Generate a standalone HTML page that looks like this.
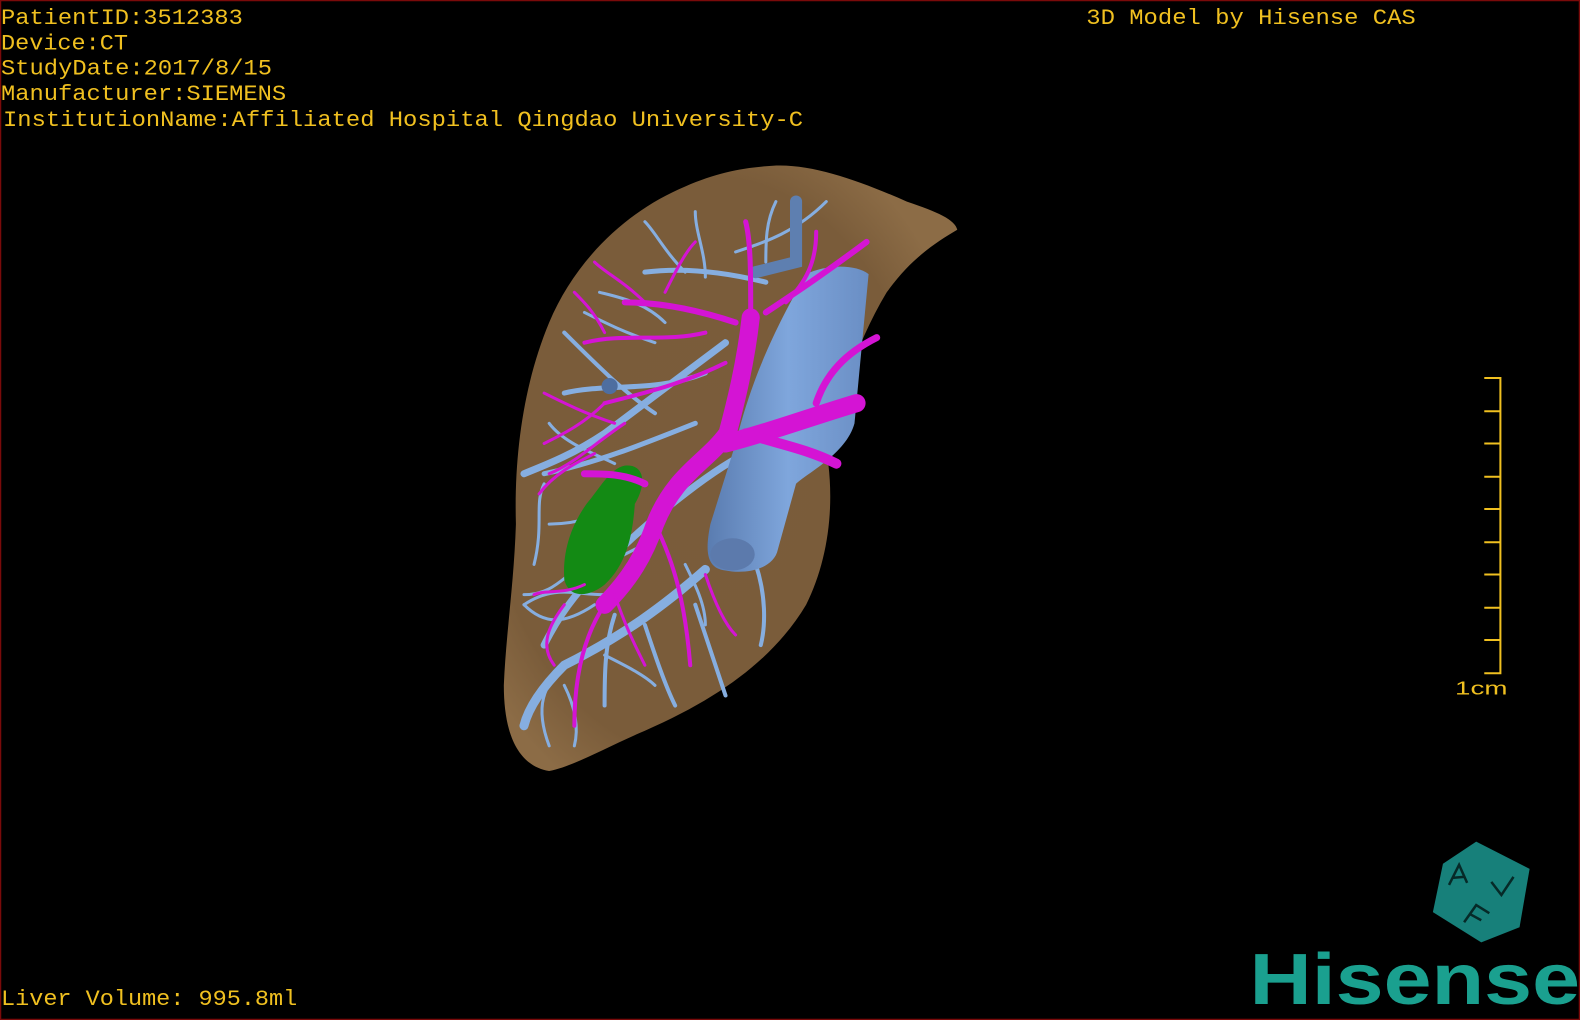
<!DOCTYPE html>
<html><head><meta charset="utf-8"><style>
html,body{margin:0;padding:0;background:#000;width:1580px;height:1020px;overflow:hidden}
svg{display:block}
</style></head><body>
<svg width="1580" height="1020" viewBox="0 0 1568 1012" preserveAspectRatio="none" xmlns="http://www.w3.org/2000/svg">
<defs>
<radialGradient id="lg" cx="0.45" cy="0.5" r="0.6">
<stop offset="0" stop-color="#7a5c3b"/><stop offset="0.8" stop-color="#7a5c3a"/><stop offset="1" stop-color="#8c6c46"/>
</radialGradient>
<linearGradient id="ivc" x1="0" y1="0" x2="1" y2="0">
<stop offset="0" stop-color="#5a7cb0"/><stop offset="0.5" stop-color="#7fa6dc"/><stop offset="1" stop-color="#6a8ec4"/>
</linearGradient>
</defs>
<rect x="0.5" y="0.5" width="1567" height="1011" fill="#000" stroke="#7a0a0a" stroke-width="1.5"/>
<path d="M760,165 C800,160 850,178 900,200 C930,210 948,218 950,228 C930,240 905,255 880,290 C850,340 830,400 822,460 C828,510 820,560 800,600 C770,650 720,690 640,725 C600,742 570,760 545,765 C515,760 500,730 500,680 C502,630 510,580 512,520 C510,450 520,380 545,320 C570,260 620,210 680,185 C710,172 735,167 760,165 Z" fill="url(#lg)"/>
<g stroke="#86aee0" stroke-linecap="round" fill="none">
<path d="M700,565 C660,600 620,630 560,660 C540,680 525,700 520,720" stroke-width="9"/>
<path d="M740,450 C700,470 640,520 600,560 C580,580 560,600 540,640" stroke-width="7"/>
<path d="M720,340 C680,370 640,400 600,430 C570,450 545,460 520,470" stroke-width="7"/>
<path d="M700,370 C650,390 600,380 560,390" stroke-width="5"/>
<path d="M690,420 C640,440 590,460 540,470" stroke-width="5"/>
<path d="M650,410 C620,390 590,360 560,330" stroke-width="4"/>
<path d="M760,280 C720,270 680,265 640,270" stroke-width="5"/>
<path d="M680,270 C660,250 650,230 640,220" stroke-width="3"/>
<path d="M700,275 C700,250 690,230 690,210" stroke-width="3"/>
<path d="M760,260 C760,240 760,220 770,200" stroke-width="3"/>
<path d="M590,600 C560,620 540,620 520,600" stroke-width="3"/>
<path d="M610,610 C600,640 600,670 600,700" stroke-width="4"/>
<path d="M640,620 C650,650 660,680 670,700" stroke-width="4"/>
<path d="M690,600 C700,630 710,660 720,690" stroke-width="4"/>
<path d="M750,560 C760,590 760,620 755,640" stroke-width="4"/>
<path d="M560,660 C540,680 530,700 545,740" stroke-width="3"/>
<path d="M540,480 C530,500 540,520 530,560" stroke-width="3"/>
<path d="M545,420 C560,440 590,450 610,460" stroke-width="3"/>
<path d="M520,600 C550,580 570,590 600,590" stroke-width="3"/>
<path d="M580,560 C560,570 550,590 520,590" stroke-width="3"/>
<path d="M580,310 C600,320 620,330 650,340" stroke-width="3"/>
<path d="M560,680 C570,700 575,720 570,740" stroke-width="3"/>
<path d="M600,650 C620,660 640,670 650,680" stroke-width="3"/>
<path d="M660,320 C640,300 615,295 595,290" stroke-width="3"/>
<path d="M620,500 C600,510 575,520 545,520" stroke-width="3"/>
<path d="M680,560 C690,580 700,600 700,620" stroke-width="3"/>
<path d="M730,250 C760,240 790,230 820,200" stroke-width="3"/>
<path d="M640,540 C620,550 600,560 585,570" stroke-width="3"/>
</g>
<path d="M790,200 L790,260 L750,270" stroke="#5e7fb0" stroke-width="12" fill="none" stroke-linecap="round"/>
<circle cx="605" cy="383" r="8" fill="#4e6ea0"/>
<path d="M800,272 C820,262 850,262 862,272 L848,420 C840,450 800,470 790,480 L772,545 C768,565 740,570 720,566 C700,564 700,545 705,520 L730,440 C740,400 755,350 800,272 Z" fill="url(#ivc)"/>
<ellipse cx="727" cy="550" rx="22" ry="16" fill="#5c7aac"/>
<path d="M620,462 C640,460 642,480 630,500 C628,530 622,560 600,580 C585,592 565,595 560,575 C558,545 568,520 582,500 C595,485 605,465 620,462 Z" fill="#138a14"/>
<g stroke="#d414d4" stroke-linecap="round" fill="none">
<path d="M745,315 C740,360 730,400 722,430 C700,460 670,470 650,520 C640,550 625,575 600,600" stroke-width="18"/>
<path d="M720,440 C760,430 800,415 850,400" stroke-width="18"/>
<path d="M740,430 C770,440 800,445 830,460" stroke-width="10"/>
<path d="M640,480 C620,470 600,470 580,470" stroke-width="7"/>
<path d="M760,310 C790,290 820,270 860,240" stroke-width="6"/>
<path d="M810,400 C820,370 840,350 870,335" stroke-width="7"/>
<path d="M730,320 C700,310 660,300 620,300" stroke-width="6"/>
<path d="M700,330 C660,340 620,330 580,340" stroke-width="4"/>
<path d="M720,360 C680,380 640,390 600,400" stroke-width="4"/>
<path d="M745,310 C745,270 745,240 740,220" stroke-width="5"/>
<path d="M780,300 C800,280 810,260 810,230" stroke-width="4"/>
<path d="M640,300 C620,280 600,270 590,260" stroke-width="3"/>
<path d="M660,290 C670,270 680,250 690,240" stroke-width="3"/>
<path d="M600,400 C580,420 560,430 540,440" stroke-width="3"/>
<path d="M620,420 C590,440 570,460 545,470" stroke-width="3"/>
<path d="M600,600 C580,630 570,670 570,720" stroke-width="4"/>
<path d="M610,590 C620,620 630,640 640,660" stroke-width="3"/>
<path d="M650,520 C670,560 680,600 685,660" stroke-width="4"/>
<path d="M560,600 C545,620 535,640 550,660" stroke-width="3"/>
<path d="M700,570 C710,600 720,620 730,630" stroke-width="3"/>
<path d="M580,580 C560,590 540,585 530,590" stroke-width="3"/>
<path d="M600,330 C590,310 580,300 570,290" stroke-width="3"/>
<path d="M610,420 C580,410 560,400 540,390" stroke-width="3"/>
<path d="M590,450 C570,460 550,470 535,490" stroke-width="3"/>
</g>
<g fill="#f0c020" font-family="Liberation Mono, monospace" font-size="22">
<text x="1" y="24" textLength="240" lengthAdjust="spacingAndGlyphs">PatientID:3512383</text>
<text x="1" y="49" textLength="126" lengthAdjust="spacingAndGlyphs">Device:CT</text>
<text x="1" y="74" textLength="269" lengthAdjust="spacingAndGlyphs">StudyDate:2017/8/15</text>
<text x="1" y="99" textLength="283" lengthAdjust="spacingAndGlyphs">Manufacturer:SIEMENS</text>
<text x="3" y="125" textLength="794" lengthAdjust="spacingAndGlyphs">InstitutionName:Affiliated Hospital Qingdao University-C</text>
<text x="1078" y="24" textLength="327" lengthAdjust="spacingAndGlyphs">3D Model by Hisense CAS</text>
<text x="1" y="997" textLength="294" lengthAdjust="spacingAndGlyphs">Liver Volume: 995.8ml</text>
</g>
<g stroke="#f0c020" stroke-width="2" fill="none">
<path d="M1473,375 H1489 V668 H1473"/>
<path d="M1473,408 H1489 M1473,440 H1489 M1473,473 H1489 M1473,505 H1489 M1473,538 H1489 M1473,570 H1489 M1473,603 H1489 M1473,635 H1489"/>
</g>
<text x="1444" y="689" fill="#f0c020" font-family="Liberation Sans, sans-serif" font-size="18" textLength="52" lengthAdjust="spacingAndGlyphs">1cm</text>
<polygon points="1465,835 1518,862 1508,920 1470,935 1422,905 1432,857" fill="#17807a"/>
<g fill="none" stroke="#062a28" stroke-width="2.5">
<path d="M1438,878 L1448,858 L1456,876 M1441,871 L1453,870"/>
<path d="M1480,875 L1490,888 L1502,870"/>
<path d="M1453,915 L1465,898 L1478,906 M1459,907 L1470,913"/>
</g>
<text x="1240" y="996" fill="#1aa08f" font-family="Liberation Sans, sans-serif" font-weight="bold" font-size="72" textLength="328" lengthAdjust="spacingAndGlyphs">Hisense</text>
</svg>
</body></html>
